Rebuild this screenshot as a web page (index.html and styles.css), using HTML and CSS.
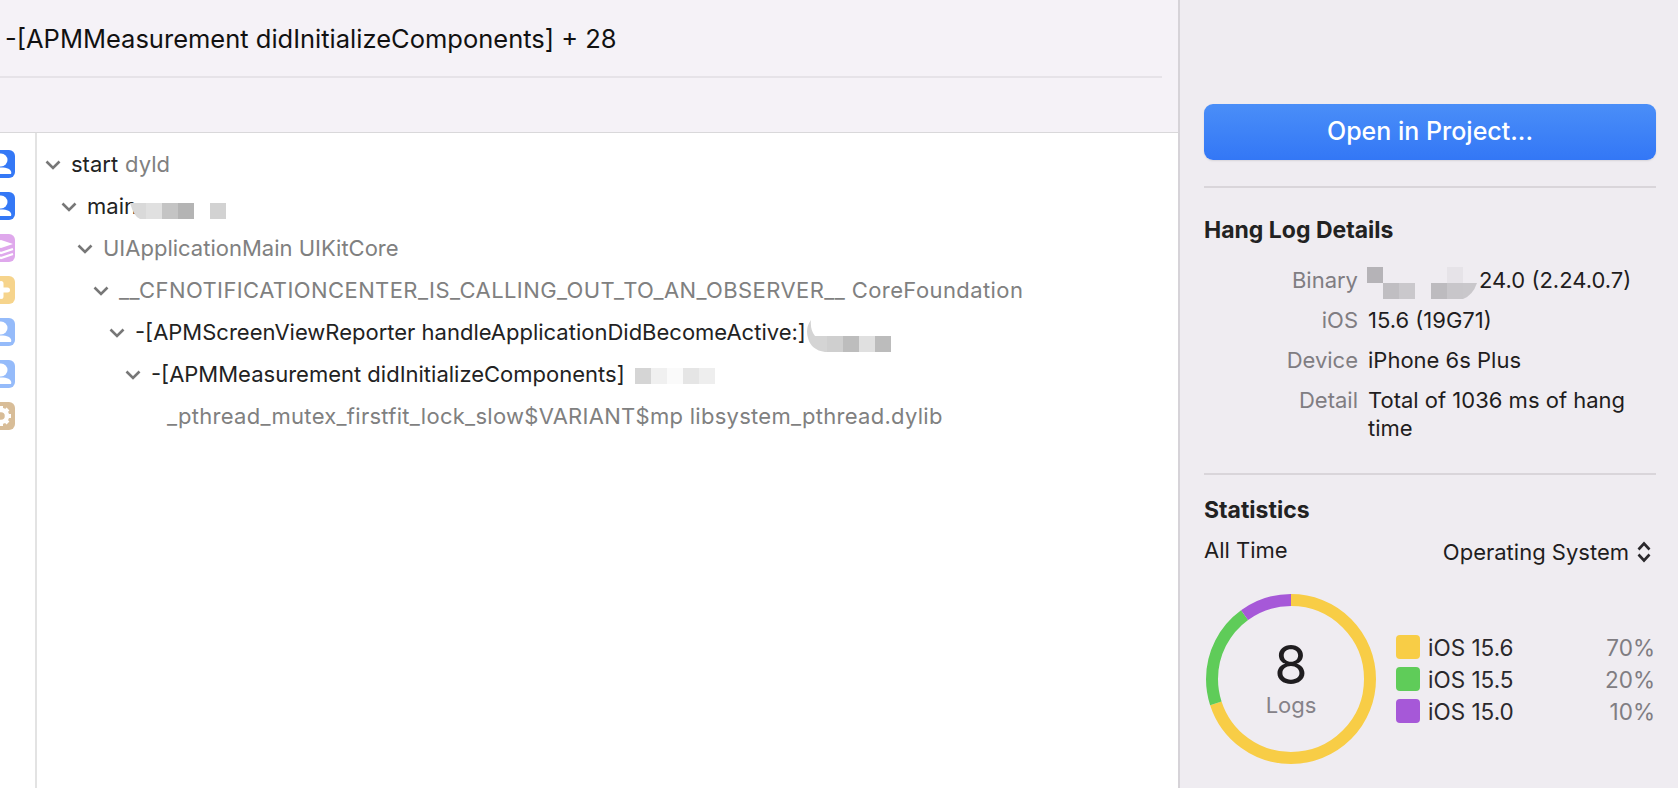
FILE: index.html
```html
<!DOCTYPE html>
<html lang="en">
<head>
<meta charset="utf-8">
<title>Hang Log</title>
<link rel="stylesheet" href="styles.css">
</head>
<body>
<div class="app">
  <main class="main">
    <header class="head">
      <div class="title-row"><h1 class="title">-[APMMeasurement didInitializeComponents] + 28</h1></div>
    </header>
    <div class="body">
      <div class="rail">
        <svg class="ico" viewBox="0 0 28 28"><rect width="28" height="28" rx="6" fill="#3478f6"/><circle cx="14" cy="10" r="6.500" fill="#fff"/><path d="M4 24c-1.500-4 3-6.500 10-6.500s11.500 2.500 10 6.500z" fill="#fff"/></svg>
        <svg class="ico" viewBox="0 0 28 28"><rect width="28" height="28" rx="6" fill="#3478f6"/><circle cx="14" cy="10" r="6.500" fill="#fff"/><path d="M4 24c-1.500-4 3-6.500 10-6.500s11.500 2.500 10 6.500z" fill="#fff"/></svg>
        <svg class="ico" viewBox="0 0 28 28"><rect width="28" height="28" rx="6" fill="#dfa8ec"/><path d="M2 10 14 6l12 4-12 4z" fill="#fff"/><path d="M2 15l12 4 12-4M2 20l12 4 12-4" fill="none" stroke="#fff" stroke-width="2.200"/></svg>
        <svg class="ico" viewBox="0 0 28 28"><rect width="28" height="28" rx="6" fill="#f6d48c"/><path d="M14 7.500v13M7.500 14h13" stroke="#fff" stroke-width="5" stroke-linecap="round"/></svg>
        <svg class="ico" viewBox="0 0 28 28"><rect width="28" height="28" rx="6" fill="#95bbfa"/><circle cx="14" cy="10" r="6.500" fill="#fff"/><path d="M4 24c-1.500-4 3-6.500 10-6.500s11.500 2.500 10 6.500z" fill="#fff"/></svg>
        <svg class="ico" viewBox="0 0 28 28"><rect width="28" height="28" rx="6" fill="#95bbfa"/><circle cx="14" cy="10" r="6.500" fill="#fff"/><path d="M4 24c-1.500-4 3-6.500 10-6.500s11.500 2.500 10 6.500z" fill="#fff"/></svg>
        <svg class="ico" viewBox="0 0 28 28"><rect width="28" height="28" rx="6" fill="#d8bd98"/><circle cx="14" cy="14" r="6" fill="none" stroke="#fff" stroke-width="4.500"/><path d="M14 4v4M14 20v4M4 14h4M20 14h4M7 7l3 3M18 18l3 3M7 21l3-3M18 10l3-3" stroke="#fff" stroke-width="4"/></svg>
      </div>
      <div class="tree">
        <div class="row l0"><svg class="chev" viewBox="0 0 16 10"><path d="M1.500 1.500 8 8l6.500-6.500"/></svg><span class="sym">start</span> <span class="lib">dyld</span></div>
        <div class="row l1"><svg class="chev" viewBox="0 0 16 10"><path d="M1.500 1.500 8 8l6.500-6.500"/></svg><span class="sym">main</span><svg class="mosaic m-main" width="96" height="16" viewBox="0 0 96 16"><path d="M0 0h16v16H10Q4 14 0 0z" fill="#d9d9d9"/><rect x="16" width="16" height="16" fill="#e0e0e0"/><rect x="32" width="16" height="16" fill="#c4c4c4"/><rect x="48" width="16" height="16" fill="#b4b4b4"/><rect x="80" width="16" height="16" fill="#d2d2d2"/></svg></div>
        <div class="row l2"><svg class="chev" viewBox="0 0 16 10"><path d="M1.500 1.500 8 8l6.500-6.500"/></svg><span class="lib">UIApplicationMain UIKitCore</span></div>
        <div class="row l3"><svg class="chev" viewBox="0 0 16 10"><path d="M1.500 1.500 8 8l6.500-6.500"/></svg><span class="lib">__CFNOTIFICATIONCENTER_IS_CALLING_OUT_TO_AN_OBSERVER__ CoreFoundation</span></div>
        <div class="row l4"><svg class="chev" viewBox="0 0 16 10"><path d="M1.500 1.500 8 8l6.500-6.500"/></svg><span class="sym">-[APMScreenViewReporter handleApplicationDidBecomeActive:]</span><svg class="mosaic m-handle" width="84" height="32" viewBox="0 0 84 32"><path d="M4 0Q-2 8 1 18 4 30 18 32H20V16H8Q3 10 4 0z" fill="#d4d4d4"/><rect x="20" y="16" width="16" height="16" fill="#cfcfcf"/><rect x="36" y="16" width="16" height="16" fill="#bdbdbd"/><rect x="52" y="16" width="16" height="16" fill="#e0e0e0"/><rect x="68" y="16" width="16" height="16" fill="#bcbcbc"/></svg></div>
        <div class="row l5"><svg class="chev" viewBox="0 0 16 10"><path d="M1.500 1.500 8 8l6.500-6.500"/></svg><span class="sym">-[APMMeasurement didInitializeComponents]</span><svg class="mosaic m-init" width="80" height="16" viewBox="0 0 80 16"><rect width="16" height="16" fill="#d5d5d5"/><rect x="16" width="16" height="16" fill="#f0f0f0"/><rect x="32" width="16" height="16" fill="#fafafa"/><rect x="48" width="16" height="16" fill="#e5e5e5"/><rect x="64" width="16" height="16" fill="#eeeeee"/></svg></div>
        <div class="row l6"><span class="lib">_pthread_mutex_firstfit_lock_slow$VARIANT$mp libsystem_pthread.dylib</span></div>
      </div>
    </div>
  </main>
  <aside class="side">
    <button class="open">Open in Project...</button>
    <div class="rule rule-a"></div>
    <h2 class="sec sec-a">Hang Log Details</h2>
    <dl class="info">
      <dt>Binary</dt>
      <dd class="bin"><svg class="mosaic m-bin" width="110" height="32" viewBox="0 0 110 32"><rect width="16" height="16" fill="#b5b3b7"/><rect x="16" y="16" width="16" height="16" fill="#c0bec2"/><rect x="32" y="16" width="16" height="16" fill="#cac8cc"/><rect x="64" y="16" width="16" height="16" fill="#bdbbbf"/><rect x="80" y="16" width="16" height="16" fill="#c8c6ca"/><rect x="80" width="16" height="16" fill="#e6e3e8"/><path d="M96 16h14Q106 28 96 32z" fill="#c9c7cb"/></svg><span class="bin-v">24.0 (2.24.0.7)</span></dd>
      <dt>iOS</dt><dd>15.6 (19G71)</dd>
      <dt>Device</dt><dd>iPhone 6s Plus</dd>
      <dt>Detail</dt><dd>Total of 1036 ms of hang time</dd>
    </dl>
    <div class="rule rule-b"></div>
    <h2 class="sec sec-b">Statistics</h2>
    <div class="filters">
      <span class="range">All Time</span>
      <span class="select">Operating System<svg class="updown" viewBox="0 0 14 22"><path d="M1.500 8.500 7 2.500l5.500 6M1.500 13.500 7 19.500l5.500-6"/></svg></span>
    </div>
    <div class="stats">
      <div class="donut">
        <svg class="ring" viewBox="0 0 170 170">
          <circle cx="85" cy="85" r="79" pathLength="100" stroke="#f8cd46" stroke-dasharray="70 30" stroke-dashoffset="0"/>
          <circle cx="85" cy="85" r="79" pathLength="100" stroke="#5fcc59" stroke-dasharray="20 80" stroke-dashoffset="-70"/>
          <circle cx="85" cy="85" r="79" pathLength="100" stroke="#a658d8" stroke-dasharray="10 90" stroke-dashoffset="-90"/>
        </svg>
        <div class="count"><span class="num">8</span><span class="cap">Logs</span></div>
      </div>
      <ul class="legend">
        <li><i class="sw yellow"></i><span class="os">iOS 15.6</span><span class="pct">70%</span></li>
        <li><i class="sw green"></i><span class="os">iOS 15.5</span><span class="pct">20%</span></li>
        <li><i class="sw purple"></i><span class="os">iOS 15.0</span><span class="pct">10%</span></li>
      </ul>
    </div>
  </aside>
</div>
</body>
</html>
```
FILE: styles.css
```css
* { box-sizing: border-box; }
html, body { margin: 0; height: 100%; overflow: hidden; }
body { font-family: Inter, "Liberation Sans", sans-serif; color: #1f1d20; background: #fff; }
.app { display: grid; grid-template-columns: 1178px 500px; height: 788px; }

.main { display: flex; flex-direction: column; min-width: 0; }
.head { height: 133px; flex: none; background: #f5f2f7; border-bottom: 1px solid #d9d8da; }
.title-row { height: 78px; margin-right: 16px; padding-left: 5px; border-bottom: 2px solid #e6e3e8; display: flex; align-items: center; }
.title { margin: 0; font-size: 25.500px; font-weight: 400; color: #111; white-space: nowrap; }

.body { flex: 1; display: flex; min-height: 0; }
.rail { width: 37px; flex: none; border-right: 2px solid #e3e3e3; padding-top: 17px; display: flex; flex-direction: column; gap: 14px; overflow: hidden; }
.ico { width: 28px; height: 28px; margin-left: -13px; flex: none; }

.tree { flex: 1; padding-top: 10px; }
.row { height: 42px; display: flex; align-items: center; font-size: 22px; white-space: nowrap; }
.chev { width: 16px; height: 10px; margin-right: 10px; flex: none; position: relative; top: 1px; }
.chev path { fill: none; stroke: #777; stroke-width: 2.600; }
.l0 { padding-left: 8px; }
.l1 { padding-left: 24px; }
.l2 { padding-left: 40px; }
.l3 { padding-left: 56px; }
.l4 { padding-left: 72px; }
.l5 { padding-left: 88px; }
.l6 { padding-left: 130px; }
.sym { color: #222; }
.lib { color: #808080; }
.l0 .lib { margin-left: 7px; }
.l3 .lib { letter-spacing: .41px; }
.l6 .lib { letter-spacing: .28px; }
.mosaic { flex: none; display: block; }
.m-main { margin: 10px 0 0 -7px; }
.m-handle { margin: 8px 0 0 1px; }
.m-init { margin: 4px 0 0 10px; }

.side { background: #efecf1; border-left: 2px solid #d6d3d8; padding: 104px 22px 0 24px; font-size: 22px; }
.open { display: block; width: 100%; height: 56px; padding: 0 0 2px; border: 0; border-radius: 9px; background: linear-gradient(#4a8ef8, #3377f6); color: #fff; font: 500 25px Inter, "Liberation Sans", sans-serif; box-shadow: 0 1px 2px rgba(0,0,0,.1); }
.rule { height: 2px; background: #d9d5da; }
.rule-a { margin-top: 26px; }
.rule-b { margin-top: 31px; }
.sec { margin: 0; font-size: 23px; line-height: 28px; font-weight: 700; color: #222; }
.sec-a { margin-top: 28px; }
.sec-b { margin-top: 21px; }

.info { margin: 22px 0 0; display: grid; grid-template-columns: 154px 1fr; column-gap: 10px; row-gap: 12px; line-height: 28px; }
.info dt { text-align: right; color: #807d82; }
.info dd { margin: 0; }
.bin { position: relative; }
.m-bin { position: absolute; left: -1px; top: 1px; }
.bin-v { display: block; margin-left: 111px; white-space: nowrap; }

.filters { display: flex; justify-content: space-between; margin-top: 12px; line-height: 28px; }
.select { display: flex; align-items: center; margin-top: 2px; padding-right: 5px; }
.updown { width: 14px; height: 22px; margin-left: 8px; }
.updown path { fill: none; stroke: #2a282c; stroke-width: 2.600; }

.stats { display: flex; align-items: center; gap: 20px; margin: 28px 1px 0 2px; }
.donut { display: grid; width: 170px; height: 170px; flex: none; }
.ring { grid-area: 1 / 1; width: 170px; height: 170px; transform: rotate(-90deg); }
.ring circle { fill: none; stroke-width: 12; }
.count { grid-area: 1 / 1; display: flex; flex-direction: column; align-items: center; padding-top: 47px; }
.num { font-size: 54px; line-height: 48px; color: #1f1d20; }
.cap { font-size: 22px; line-height: 28px; color: #858288; margin-top: 2px; }

.legend { list-style: none; margin: 0; padding: 0; flex: 1; display: flex; flex-direction: column; gap: 8px; font-size: 22.500px; }
.legend li { display: flex; align-items: center; height: 24px; }
.sw { width: 24px; height: 24px; border-radius: 4px; margin-right: 8px; flex: none; }
.yellow { background: #f8cd46; }
.green { background: #5fcc59; }
.purple { background: #a658d8; }
.os { flex: 1; color: #2a282c; }
.pct { color: #807d82; }
```
